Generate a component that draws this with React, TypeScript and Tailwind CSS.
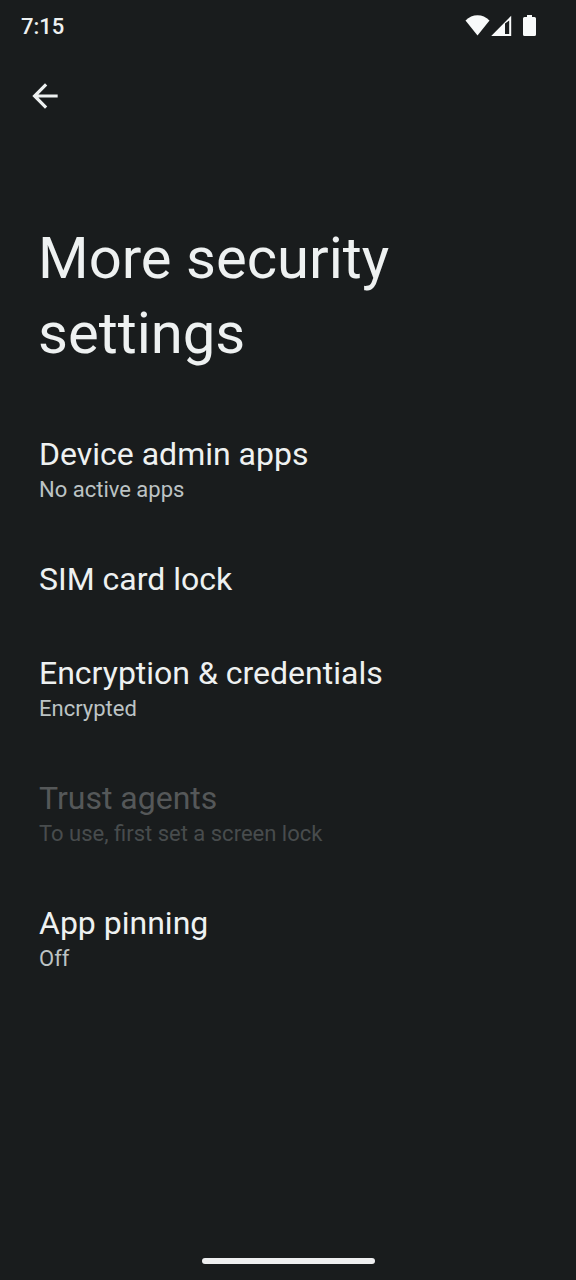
type Setting = {
  title: string;
  summary?: string;
  disabled?: boolean;
};

const settings: Setting[] = [
  { title: "Device admin apps", summary: "No active apps" },
  { title: "SIM card lock" },
  { title: "Encryption & credentials", summary: "Encrypted" },
  {
    title: "Trust agents",
    summary: "To use, first set a screen lock",
    disabled: true,
  },
  { title: "App pinning", summary: "Off" },
];

const StatusBar = () => (
  <div className="flex h-[54px] items-center justify-between pl-[21px] pr-10">
    <span className="text-[22px] leading-[26px] font-medium">7:15</span>
    <div className="flex items-center pb-0.5 text-[#f8fafa]">
      <svg width="26" height="22" viewBox="0 0 26 22" fill="currentColor">
        <path d="M12.500 20.500.5 5.500C4 2 8 .3 12.500.3s8.500 1.700 12 5.200z" />
      </svg>
      <svg width="21" height="22" viewBox="0 0 21 22" fill="currentColor">
        <path fillRule="evenodd" d="M.2 21 20.200.8V21zM14 8.500V19h4.200V5.500z" />
      </svg>
      <svg
        className="ml-[11px]"
        width="13"
        height="22"
        viewBox="0 0 13 22"
        fill="currentColor"
      >
        <path d="M4 0h5v2h2.500q1.500 0 1.500 1.500v16q0 1.500-1.500 1.500h-10Q0 21 0 19.500v-16Q0 2 1.500 2H4z" />
      </svg>
    </div>
  </div>
);

const SettingRow = ({ title, summary, disabled }: Setting) => (
  <li>
    <button
      type="button"
      disabled={disabled}
      className="block w-full px-[39px] py-7 text-left text-[#eef1f1] disabled:text-[#555859]"
    >
      <span className="block text-[32px] leading-[38px]">{title}</span>
      {summary && (
        <span
          className={`mt-[3px] block text-[22px] leading-7 ${
            disabled ? "text-[#484c4d]" : "text-[#bcc3c4]"
          }`}
        >
          {summary}
        </span>
      )}
    </button>
  </li>
);

const App = () => {
  return (
    <div className="flex min-h-screen flex-col bg-[#191c1d] font-[Roboto,sans-serif] text-[#eef1f1]">
      <StatusBar />
      <header>
        <button
          type="button"
          aria-label="Back"
          className="ml-5 mt-[17px] block p-1.5"
        >
          <svg width="38" height="38" viewBox="0 0 24 24" fill="currentColor">
            <path d="M20 11H7.830l5.590-5.590L12 4l-8 8 8 8 1.410-1.410L7.830 13H20z" />
          </svg>
        </button>
        <h1 className="mt-[100px] max-w-[480px] px-[38px] text-[58px] leading-[75px]">
          More security settings
        </h1>
      </header>
      <main className="mt-9 flex-1">
        <ul>
          {settings.map((setting) => (
            <SettingRow key={setting.title} {...setting} />
          ))}
        </ul>
      </main>
      <div className="flex justify-center pb-4">
        <div className="h-1.5 w-[173px] rounded-full bg-[#eeeff0]" />
      </div>
    </div>
  );
};

export default App;
